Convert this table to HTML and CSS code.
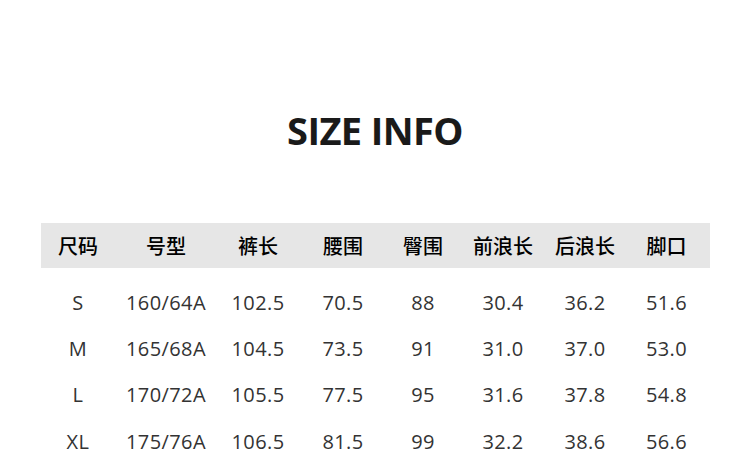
FILE: index.html
```html
<!DOCTYPE html>
<html lang="zh-CN">
<head>
<meta charset="utf-8">
<link rel="stylesheet" href="styles.css">
</head>
<body>
<div class="page">
  <h1 class="title">SIZE INFO</h1>
  <div class="table">
    <div class="row head">
      <div>尺码</div><div>号型</div><div>裤长</div><div>腰围</div><div>臀围</div><div>前浪长</div><div>后浪长</div><div>脚口</div>
    </div>
    <div class="body">
      <div class="row"><div>S</div><div>160/64A</div><div>102.5</div><div>70.5</div><div>88</div><div>30.4</div><div>36.2</div><div>51.6</div></div>
      <div class="row"><div>M</div><div>165/68A</div><div>104.5</div><div>73.5</div><div>91</div><div>31.0</div><div>37.0</div><div>53.0</div></div>
      <div class="row"><div>L</div><div>170/72A</div><div>105.5</div><div>77.5</div><div>95</div><div>31.6</div><div>37.8</div><div>54.8</div></div>
      <div class="row"><div>XL</div><div>175/76A</div><div>106.5</div><div>81.5</div><div>99</div><div>32.2</div><div>38.6</div><div>56.6</div></div>
    </div>
  </div>
</div>
</body>
</html>
```
FILE: styles.css
```css
html, body {
  margin: 0;
  padding: 0;
  background: #ffffff;
}
.page {
  width: 750px;
  height: 464px;
  overflow: hidden;
  font-family: "Open Sans", "Noto Sans", "Noto Sans CJK SC", sans-serif;
}
.title {
  margin: 0 0 66px;
  padding-top: 103px;
  text-align: center;
  font-size: 38px;
  line-height: 54px;
  font-weight: 700;
  color: #1a1a1a;
  letter-spacing: -0.6px;
}
.table {
  margin: 0 40px 0 41px;
}
.row {
  display: grid;
  grid-template-columns: 74px 102px 82px 88px 72px 88px 76px 87px;
  align-items: center;
  text-align: center;
}
.head {
  height: 45px;
  background: #e6e6e6;
  color: #000000;
  font-family: "Noto Sans CJK SC", sans-serif;
  font-size: 20px;
  font-weight: 500;
}
.body {
  padding-top: 11px;
}
.body .row {
  height: 46.3px;
  font-size: 20px;
  letter-spacing: 0.4px;
  color: #333333;
}
```
